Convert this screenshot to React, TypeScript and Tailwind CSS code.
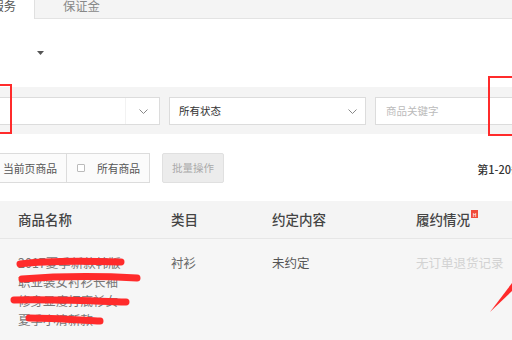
import React from "react";

function Chevron() {
  return (
    <svg width="9" height="5" viewBox="0 0 9 5" className="shrink-0">
      <polyline points="0.5,0.5 4.5,4.5 8.5,0.5" fill="none" stroke="#888" strokeWidth="1" />
    </svg>
  );
}

function Annotations() {
  return (
    <svg
      className="pointer-events-none absolute left-0 top-0"
      width="512"
      height="340"
      viewBox="0 0 512 340"
    >
      <g stroke="#ff2b2b" fill="none" strokeLinecap="round">
        <rect x="-4" y="85" width="15" height="48" strokeWidth="2" />
        <rect x="489" y="77" width="30" height="58" strokeWidth="2" />
        <path d="M20 264 C 50 260, 90 261, 121 262" strokeWidth="7" />
        <path d="M22 279 C 60 276, 100 276, 137 278" strokeWidth="7" />
        <path d="M14 300 C 50 299, 90 301, 126 302" strokeWidth="7" />
        <path d="M29 318 C 50 318, 80 320, 100 321" strokeWidth="7" />
      </g>
      <polygon points="490,312 512,283 512,291" fill="#ff2b2b" />
    </svg>
  );
}

export default function App() {
  return (
    <div className="relative h-[340px] w-[512px] overflow-hidden bg-white font-[family-name:'Noto_Sans_CJK_SC','Noto_Sans',sans-serif] text-[#333]">
      {/* tabs */}
      <div className="flex h-[19px] border-b border-[#e3e3e3] bg-[#f4f4f4]">
        <div className="-mb-px flex h-[19px] w-[35px] shrink-0 justify-end whitespace-nowrap border-r border-[#e0e0e0] bg-white pr-[18px] text-[12.3px] leading-[12px] text-[#555]">
          服务
        </div>
        <div className="pl-[28px] text-[12.3px] leading-[12px] text-[#888]">保证金</div>
      </div>

      <div className="h-[68px] pl-[37px] pt-[32px]">
        <svg width="7" height="4" viewBox="0 0 7 4">
          <polygon points="0,0 7,0 3.5,4" fill="#555" />
        </svg>
      </div>

      {/* filters */}
      <div className="flex h-[47px] gap-[9px] bg-[#f4f4f4] pt-[10px]">
        <div className="-ml-[2px] flex h-[28px] w-[162px] shrink-0 items-center border border-[#dcdcdc] bg-white">
          <div className="h-full w-[127px] border-r border-[#f2f2f2]" />
          <div className="flex flex-1 justify-center pl-[1px]">
            <Chevron />
          </div>
        </div>
        <div className="flex h-[28px] w-[197px] shrink-0 items-center justify-between border border-[#dcdcdc] bg-white pl-[9px] pr-[8px] text-[10.5px] text-[#333]">
          <span>所有状态</span>
          <Chevron />
        </div>
        <div className="flex h-[28px] w-[160px] shrink-0 items-center border border-[#dcdcdc] bg-white pl-[10px] text-[10.5px] text-[#bbb]">
          商品关键字
        </div>
      </div>

      {/* actions */}
      <div className="flex h-[67px] items-start pt-[19px]">
        <div className="-ml-[2px] flex h-[30px] shrink-0 items-center border border-[#dcdcdc] bg-[#fbfbfb] pl-[4px] pr-[9px] text-[10.8px] text-[#555]">
          当前页商品
        </div>
        <div className="-ml-px flex h-[30px] w-[84px] shrink-0 items-center border border-[#dcdcdc] bg-[#fbfbfb] pl-[10px] text-[10.8px] text-[#555]">
          <span className="h-[8px] w-[8px] rounded-[1px] border border-[#bbb] bg-white" />
          <span className="ml-[12px]">所有商品</span>
        </div>
        <div className="ml-[12px] flex h-[30px] w-[62px] shrink-0 items-center justify-center rounded-[2px] border border-[#e0e0e0] bg-[#ececec] text-[10.5px] text-[#aaa]">
          批量操作
        </div>
        <div className="ml-auto -mr-[10px] mt-[8px] shrink-0 text-[11px] font-medium text-[#333]">第1-20条</div>
      </div>

      {/* table header */}
      <div className="flex h-[38px] items-center border-b border-[#e6e6e6] bg-[#f4f4f4] text-[13.5px] font-medium text-[#444]">
        <div className="w-[171px] shrink-0 pl-[18px]">商品名称</div>
        <div className="w-[101px] shrink-0">类目</div>
        <div className="w-[144px] shrink-0">约定内容</div>
        <div className="flex flex-1 items-start">
          <span>履约情况</span>
          <span className="relative top-[1px] ml-[1px] flex h-[8px] w-[7px] items-center justify-center bg-[#f04b3a] text-[5px] leading-none text-white">
            H
          </span>
        </div>
      </div>

      {/* table row */}
      <div className="flex h-[101px] bg-[#f6f6f6] pt-[14px] text-[12.5px] leading-[19px]">
        <div className="w-[171px] shrink-0 pl-[18px] text-[#777]">
          <div>2017夏季新款韩版</div>
          <div>职业装女衬衫长袖</div>
          <div>修身显瘦打底衫女</div>
          <div>夏季小清新款</div>
        </div>
        <div className="w-[101px] shrink-0 text-[#666]">衬衫</div>
        <div className="w-[144px] shrink-0 text-[#555]">未约定</div>
        <div className="flex-1 whitespace-nowrap text-[#d2d2d2]">无订单退货记录</div>
      </div>

      <Annotations />
    </div>
  );
}
